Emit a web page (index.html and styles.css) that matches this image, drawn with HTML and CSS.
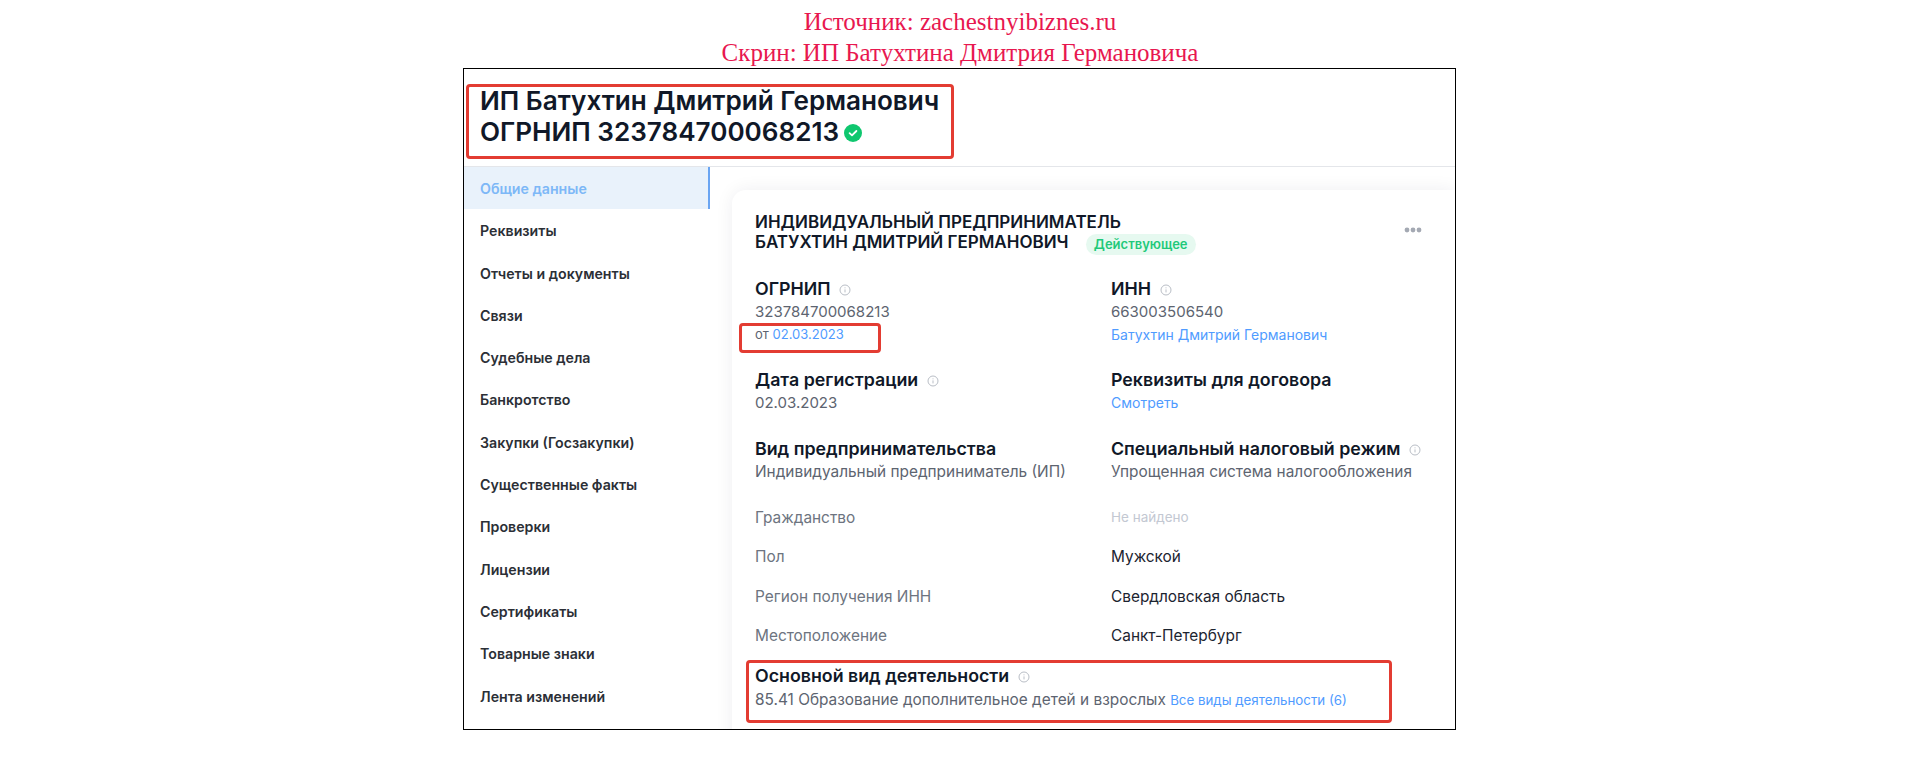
FILE: index.html
```html
<!DOCTYPE html>
<html lang="ru">
<head>
    <meta charset="UTF-8">
    <title>ИП Батухтин Дмитрий Германович</title>
    <link rel="stylesheet" href="styles.css">
</head>
<body>

    <div class="source">
        <div>Источник: zachestnyibiznes.ru</div>
        <div>Скрин: ИП Батухтина Дмитрия Германовича</div>
    </div>

    <div class="frame">
        <div class="page-head">
            <h1>ИП Батухтин Дмитрий Германович<br>ОГРНИП 323784700068213
                <svg class="check" width="18" height="18" viewBox="0 0 18 18"><circle cx="9" cy="9" r="9" fill="#0fc76f"/><path d="M5.6 9.2l2.4 2.2 4.4-4.4" fill="none" stroke="#fff" stroke-width="1.8" stroke-linecap="round" stroke-linejoin="round"/></svg>
            </h1>
        </div>

        <div class="page-body">
            <ul class="side-menu">
                <li class="active">Общие данные</li>
                <li>Реквизиты</li>
                <li>Отчеты и документы</li>
                <li>Связи</li>
                <li>Судебные дела</li>
                <li>Банкротство</li>
                <li>Закупки (Госзакупки)</li>
                <li>Существенные факты</li>
                <li>Проверки</li>
                <li>Лицензии</li>
                <li>Сертификаты</li>
                <li>Товарные знаки</li>
                <li>Лента изменений</li>
            </ul>

            <div class="card">
                <div class="card-head">
                    <div class="card-title">ИНДИВИДУАЛЬНЫЙ ПРЕДПРИНИМАТЕЛЬ<br>БАТУХТИН ДМИТРИЙ ГЕРМАНОВИЧ <span class="status">Действующее</span></div>
                    <svg class="more" width="18" height="6" viewBox="0 0 18 6"><circle cx="3" cy="3" r="2.4"/><circle cx="9" cy="3" r="2.4"/><circle cx="15" cy="3" r="2.4"/></svg>
                </div>

                <div class="info-grid block-one">
                    <div>
                        <div class="label">ОГРНИП <svg class="hint" viewBox="0 0 12 12"><use href="#hint-icon"/></svg></div>
                        <div class="value num">323784700068213</div>
                        <div class="sub">от <a>02.03.2023</a></div>
                    </div>
                    <div>
                        <div class="label">ИНН <svg class="hint" viewBox="0 0 12 12"><use href="#hint-icon"/></svg></div>
                        <div class="value num">663003506540</div>
                        <div class="sub"><a class="name-link">Батухтин Дмитрий Германович</a></div>
                    </div>
                </div>

                <div class="info-grid block-two">
                    <div>
                        <div class="label">Дата регистрации <svg class="hint" viewBox="0 0 12 12"><use href="#hint-icon"/></svg></div>
                        <div class="value num">02.03.2023</div>
                    </div>
                    <div>
                        <div class="label">Реквизиты для договора</div>
                        <div class="sub"><a class="name-link">Смотреть</a></div>
                    </div>
                </div>

                <div class="info-grid block-three">
                    <div>
                        <div class="label">Вид предпринимательства</div>
                        <div class="value">Индивидуальный предприниматель (ИП)</div>
                    </div>
                    <div>
                        <div class="label">Специальный налоговый режим <svg class="hint" viewBox="0 0 12 12"><use href="#hint-icon"/></svg></div>
                        <div class="value">Упрощенная система налогообложения</div>
                    </div>
                </div>

                <div class="info-grid rows">
                    <div class="row-name">Гражданство</div><div class="row-none">Не найдено</div>
                    <div class="row-name">Пол</div><div class="row-val">Мужской</div>
                    <div class="row-name">Регион получения ИНН</div><div class="row-val">Свердловская область</div>
                    <div class="row-name">Местоположение</div><div class="row-val">Санкт-Петербург</div>
                </div>

                <div class="activity">
                    <div class="label">Основной вид деятельности <svg class="hint" viewBox="0 0 12 12"><use href="#hint-icon"/></svg></div>
                    <div class="value">85.41 Образование дополнительное детей и взрослых <a class="small-link">Все виды деятельности (6)</a></div>
                </div>
            </div>
        </div>

        <div class="mark mark-title"></div>
        <div class="mark mark-date"></div>
        <div class="mark mark-activity"></div>
    </div>

    <svg width="0" height="0" class="defs">
        <symbol id="hint-icon" viewBox="0 0 12 12">
            <circle cx="6" cy="6" r="5" fill="none" stroke="#b9bec6" stroke-width="1"/>
            <path d="M6 5.4v3M6 3.4v.9" stroke="#b9bec6" stroke-width="1"/>
        </symbol>
    </svg>

</body>
</html>
```

FILE: styles.css
```css
* {
    box-sizing: border-box;
}
body {
    margin: 0;
    background-color: #fff;
    font-family: Inter, "Noto Sans", sans-serif;
    color: #101828;
}
a {
    color: #4f9bff;
}
.defs {
    position: absolute;
}
.source {
    padding-top: 6px;
    height: 68px;
    text-align: center;
    font-family: "Liberation Serif", serif;
    font-size: 25px;
    line-height: 31px;
    color: #e8174f;
}
.frame {
    position: relative;
    width: 993px;
    height: 662px;
    margin-left: 463px;
    border: 1.5px solid #000;
    overflow: hidden;
}
.page-head {
    height: 98px;
    padding: 16px 0 0 16px;
    border-bottom: 1px solid #e4e6ea;
}
h1 {
    margin: 0;
    font-size: 26.1px;
    line-height: 31px;
    font-weight: 600;
}
.check {
    margin: -8px 0 0 -2px;
    vertical-align: -1px;
}
.page-body {
    display: flex;
}
.side-menu {
    list-style: none;
    margin: 0;
    padding: 0;
    width: 246px;
    flex-shrink: 0;
}
.side-menu li {
    height: 42.3px;
    padding-left: 16px;
    line-height: 44px;
    font-size: 14.2px;
    font-weight: 600;
    color: #2b2f36;
}
.side-menu .active {
    background-color: #e9f2fb;
    border-right: 2px solid #6aa5f2;
    color: #7db8f7;
}
.card {
    flex: 1;
    margin: 23px 0 0 22px;
    padding: 22px 23px 0;
    border-radius: 14px 0 0 0;
    background-color: #fff;
    box-shadow: 0 0 18px rgba(20, 30, 50, 0.07);
    min-height: 600px;
}
.card-head {
    display: flex;
    justify-content: space-between;
}
.card-title {
    font-size: 17px;
    line-height: 20px;
    font-weight: 600;
}
.status {
    display: inline-block;
    margin-left: 13px;
    padding: 0 8px;
    height: 21px;
    line-height: 21px;
    border-radius: 11px;
    background-color: #e6f9f0;
    color: #1fc97a;
    font-size: 13px;
    vertical-align: -1px;
}
.more {
    margin: 15px 10px 0 0;
    fill: #a4a9b3;
}
.info-grid {
    display: grid;
    grid-template-columns: 356px 1fr;
}
.block-one {
    margin-top: 23px;
}
.block-two {
    margin-top: 22px;
}
.block-three {
    margin-top: 23px;
}
.label {
    font-size: 17.8px;
    line-height: 22px;
    font-weight: 600;
}
.hint {
    width: 12px;
    height: 12px;
    margin-left: 4px;
    vertical-align: -1px;
}
.value {
    font-size: 15.4px;
    line-height: 23px;
    color: #5d6470;
}
.num {
    font-size: 15px;
}
.sub {
    font-size: 13px;
    line-height: 23px;
    color: #5d6470;
}
.name-link {
    font-size: 14px;
}
.rows {
    margin-top: 15px;
    grid-auto-rows: 39.4px;
    font-size: 15.4px;
    line-height: 39px;
}
.row-name {
    color: #6d7480;
}
.row-val {
    color: #1c2430;
}
.row-none {
    font-size: 13.5px;
    color: #c3c8d2;
}
.activity {
    margin-top: 9px;
}
.activity .value {
    line-height: 26px;
}
.small-link {
    font-size: 13.3px;
}
.mark {
    position: absolute;
    border: 3px solid #e33c32;
    border-radius: 4px;
}
.mark-title {
    left: 2px;
    top: 15px;
    width: 488px;
    height: 75px;
}
.mark-date {
    left: 275px;
    top: 254px;
    width: 142px;
    height: 30px;
}
.mark-activity {
    left: 282px;
    top: 591px;
    width: 646px;
    height: 63px;
}
```
